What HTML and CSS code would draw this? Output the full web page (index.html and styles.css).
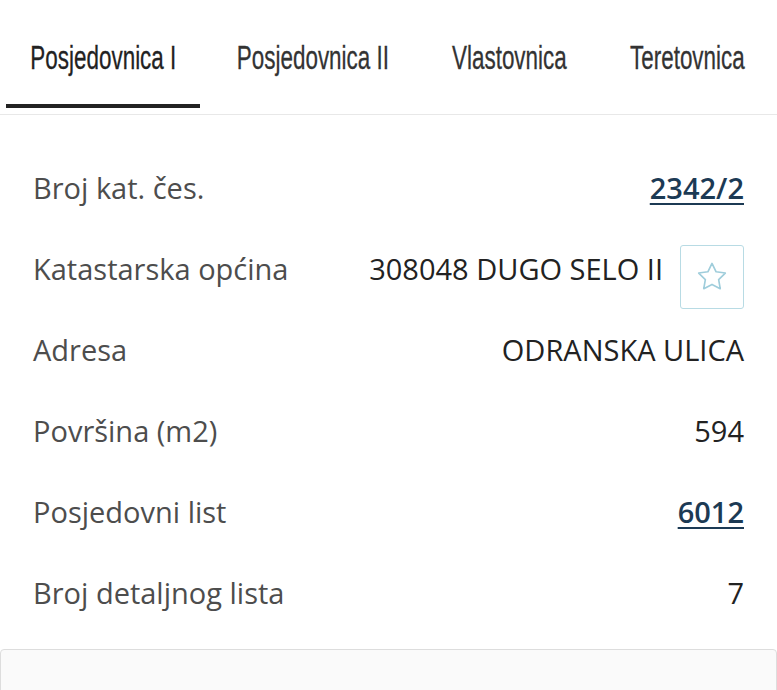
FILE: index.html
```html
<!DOCTYPE html>
<html lang="hr">
<head>
<meta charset="utf-8">
<title>Posjedovnica</title>
<link rel="stylesheet" href="styles.css">
</head>
<body>
<nav class="tabs">
  <a class="tab tab-p1 active"><span class="tab-label">Posjedovnica I</span></a>
  <a class="tab tab-p2"><span class="tab-label">Posjedovnica II</span></a>
  <a class="tab tab-vl"><span class="tab-label">Vlastovnica</span></a>
  <a class="tab tab-te"><span class="tab-label">Teretovnica</span></a>
</nav>
<dl class="details">
  <div class="row"><dt>Broj kat. čes.</dt><dd><a class="link">2342/2</a></dd></div>
  <div class="row"><dt>Katastarska općina</dt><dd class="with-btn"><span>308048 DUGO SELO II</span>
    <button class="fav" type="button" aria-label="Favorit">
      <svg width="38" height="38" viewBox="0 0 24 24"><path d="M12 3.4l2.6 5.3 5.8.8-4.2 4.1 1 5.8L12 16.7l-5.2 2.7 1-5.8-4.2-4.1 5.8-.8z" fill="none" stroke="#9fcddb" stroke-width="1.05" stroke-linejoin="round"/></svg>
    </button></dd></div>
  <div class="row"><dt>Adresa</dt><dd>ODRANSKA ULICA</dd></div>
  <div class="row"><dt>Površina (m2)</dt><dd>594</dd></div>
  <div class="row"><dt>Posjedovni list</dt><dd><a class="link">6012</a></dd></div>
  <div class="row"><dt>Broj detaljnog lista</dt><dd>7</dd></div>
</dl>
<div class="panel"></div>
</body>
</html>
```
FILE: styles.css
```css
html, body {
  margin: 0;
  padding: 0;
  background: #ffffff;
}
body {
  font-family: "Open Sans", "Noto Sans", sans-serif;
  overflow: hidden;
}
.tabs {
  display: flex;
  gap: 12px;
  padding: 0 0 6px 6px;
  border-bottom: 1px solid #e8e8e8;
}
.tab {
  display: flex;
  justify-content: center;
  min-width: 0;
  font-family: "Liberation Sans", Arial, sans-serif;
  font-size: 33px;
  line-height: 40px;
  color: #333333;
  padding: 38px 0 26px;
  border-bottom: 4px solid transparent;
  white-space: nowrap;
  overflow: visible;
}
.tab-p1 { flex: 0 0 194px; }
.tab-p2 { flex: 0 0 202px; }
.tab-vl { flex: 0 0 166px; }
.tab-te { flex: 0 0 167px; }
.tab-label {
  display: inline-block;
  flex-shrink: 0;
  transform: scaleX(0.68);
  transform-origin: center center;
  -webkit-text-stroke: 0.3px currentColor;
}
.tab.active {
  border-bottom-color: #222222;
  color: #222222;
}
.details {
  margin: 32px 0 0;
  padding: 0 33px;
}
.row {
  display: flex;
  align-items: center;
  justify-content: space-between;
  height: 81px;
}
dt {
  font-size: 29px;
  color: #4d4d4d;
}
dd {
  margin: 0;
  font-size: 29px;
  color: #222222;
}
.with-btn {
  display: flex;
  align-items: center;
  gap: 17px;
}
.link {
  color: #1c3a54;
  font-weight: 600;
  text-decoration: underline;
  text-decoration-thickness: 2px;
  text-underline-offset: 4px;
}
.fav {
  width: 64px;
  height: 64px;
  margin-top: 16px;
  padding: 0;
  background: #ffffff;
  border: 1px solid #b8dbe4;
  border-radius: 3px;
  display: flex;
  align-items: center;
  justify-content: center;
}
.panel {
  margin-top: 16px;
  height: 60px;
  background: #fafafa;
  border: 1px solid #dddddd;
  border-radius: 4px;
}
```
